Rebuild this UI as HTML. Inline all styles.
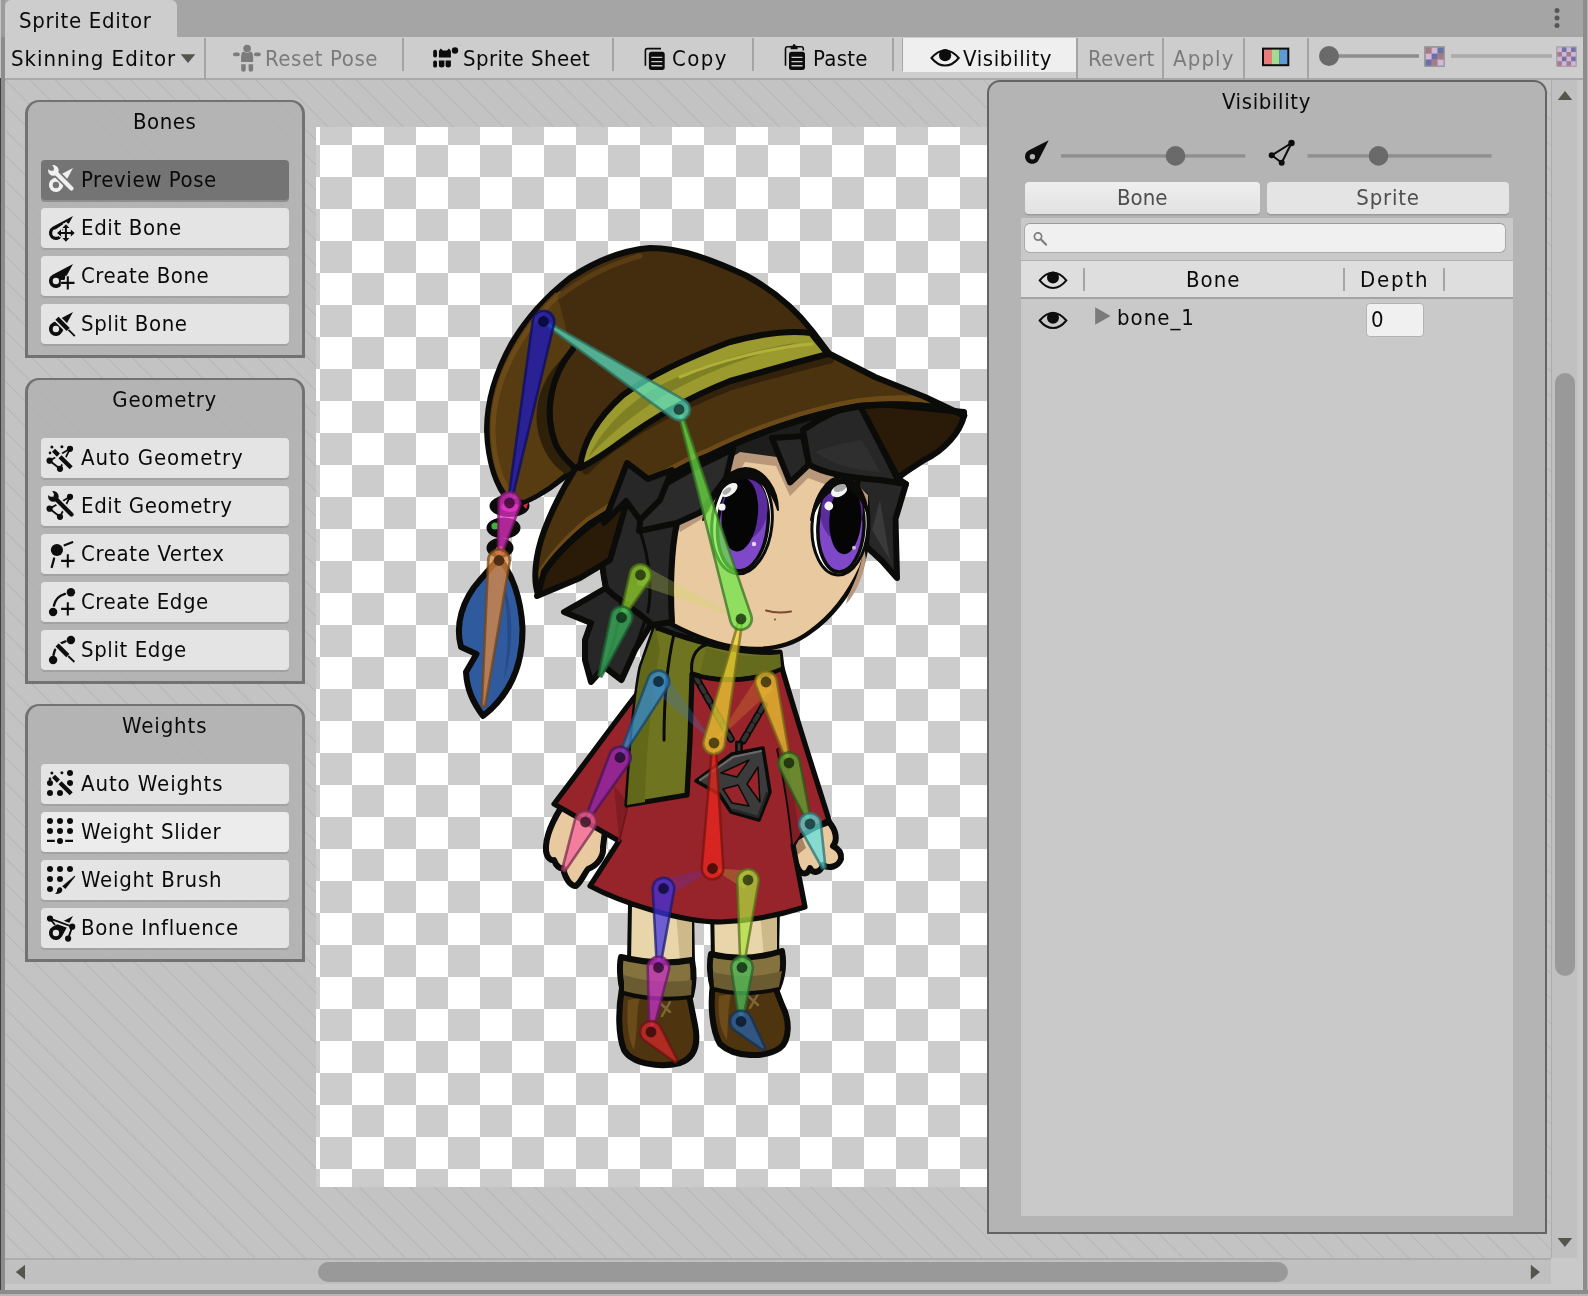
<!DOCTYPE html>
<html lang="en">
<head>
<meta charset="utf-8">
<title>Sprite Editor</title>
<style>
*{box-sizing:border-box;margin:0;padding:0}
html,body{width:1588px;height:1296px;overflow:hidden}
body{position:relative;background:#c3c3c3;font-family:"DejaVu Sans Condensed","DejaVu Sans","Liberation Sans",sans-serif;font-stretch:condensed;font-size:22px;letter-spacing:.4px;color:#0a0a0a;-webkit-font-smoothing:antialiased}
.abs{position:absolute}
#lborder{left:0;top:0;width:5px;height:1296px;background:linear-gradient(#9c9c9c 0,#9c9c9c 36px,#8c8c8c 38px);border-left:1px solid #404040;border-image:linear-gradient(#c4c4c4 0,#c4c4c4 79px,#404040 79px) 1}
#rborder{left:1583px;top:0;width:5px;height:1296px;background:#8c8c8c;border-right:1px solid #b5b5b5}
#tabbar{left:4px;top:0;width:1579px;height:38px;background:#a5a5a5;border-bottom:1.500px solid #9a9a9a}
#tab{left:5px;top:0;width:172px;height:38px;background:#cdcdcd;border-radius:6px 6px 0 0}
#tab span{position:absolute;left:14px;top:7px;line-height:28px;white-space:nowrap}
#toolbar{left:4px;top:37px;width:1579px;height:43px;background:#cdcdcd;border-bottom:2px solid #a9a9a9}
.sep{position:absolute;top:38px;width:2px;height:33px;background:#a4a4a4}
.tbt{position:absolute;top:45px;white-space:nowrap;line-height:28px;height:28px}
.dis{color:#7b7b7b}
#visbtn{left:903px;top:38px;width:173px;height:34px;background:#efefef}
/* panels */
.panel{position:absolute;left:25px;width:280px;background:rgba(177,177,177,.86);border:3px solid #727272;border-width:2px 3.300px 3.500px 3.300px;border-radius:14px 14px 0 0}
.panel h3{position:absolute;left:0;width:273.400px;top:6px;text-align:center;font-weight:normal;font-size:22px;line-height:28px}
.btn{position:absolute;left:12.700px;width:248px;height:40px;background:#e4e4e4;border-radius:4px;box-shadow:0 2px 0 #a2a2a2}
.btn span{position:absolute;left:40px;top:6px;line-height:28px;white-space:nowrap}
.btn svg{position:absolute;left:0;top:0;width:40px;height:40px}
.btn.on{background:#747474;box-shadow:0 2px 0 #8e8e8e}
#checker{left:316px;top:127px;width:672px;height:1060px;background:#fff}

#vis{left:987px;top:80px;width:560px;height:1154px;background:#b4b4b4;border:2px solid #646464;border-radius:13px 13px 0 0}
#vis .ttl{position:absolute;left:0;width:555px;top:6px;text-align:center;line-height:28px}
#vlist{left:1021px;top:218px;width:492px;height:998px;background:#c9c9c9}
.vbtn{position:absolute;top:182px;height:32px;border-radius:4px;background:linear-gradient(#efefef,#e1e1e1);box-shadow:0 1.500px 0 #9b9b9b;text-align:center;color:#4e4e4e;line-height:32px}
#vsearch{left:1024px;top:223px;width:482px;height:30px;background:#f0f0f0;border:1.500px solid #a9a9a9;border-top-color:#9a9a9a;border-radius:6px}
#vhead{left:1021px;top:260px;width:492px;height:39px;background:#dedede;border-top:1px solid #b0b0b0;border-bottom:2px solid #a3a3a3}
.hsep{position:absolute;top:268px;width:2px;height:23px;background:#a6a6a6}
.vt{position:absolute;white-space:nowrap;line-height:28px}
#depth{left:1366px;top:303px;width:58px;height:34px;background:#f0f0f0;border:1.500px solid #b3b3b3;border-radius:4px}
#vscroll{left:1551px;top:80px;width:26px;height:1178px;background:#c0c0c0;border-left:1.500px solid #adadad}
#vstrip{left:1577px;top:80px;width:6px;height:1210px;background:#c9c9c9}
#vthumb{left:1555px;top:372.500px;width:20px;height:603.500px;background:#999;border-radius:10px}
#hscroll{left:4px;top:1258px;width:1547px;height:26px;background:#c0c0c0;border-top:2px solid #adadad}
#hthumb{left:318px;top:1262px;width:970px;height:20px;background:#999;border-radius:10px}
#corner{left:1551px;top:1258px;width:32px;height:26px;background:#c9c9c9}
#bot1{left:4px;top:1284px;width:1579px;height:6px;background:#c9c9c9}
#bot2{left:0;top:1290px;width:1588px;height:6px;background:#8c8c8c;border-bottom:2px solid #b5b5b5}
.btn span,.tbt,.vt,.vbtn,.panel h3,#tab span,#vis .ttl{will-change:transform}
</style>
</head>
<body>
<svg id="hatch" class="abs" style="left:4px;top:79px" width="1579" height="1180" viewBox="4 79 1579 1180"><defs><pattern id="hp" width="25.090" height="25.090" patternUnits="userSpaceOnUse" patternTransform="translate(0.380 0)"><path d="M-1 -1L26.090 26.090" stroke="#a9a9a9" stroke-width="0.750"/></pattern></defs><rect x="4" y="79" width="1579" height="1180" fill="#c3c3c3"/><rect x="4" y="79" width="1579" height="1180" fill="url(#hp)"/></svg>
<div id="tabbar" class="abs"></div>
<div id="tab" class="abs"><span style="letter-spacing:0.69px">Sprite Editor</span></div>
<div id="toolbar" class="abs"></div>

<div class="sep" style="left:204px;height:41px"></div>
<div class="sep" style="left:402px"></div>
<div class="sep" style="left:612px"></div>
<div class="sep" style="left:752px"></div>
<div class="sep" style="left:892px"></div>
<div class="sep" style="left:902px"></div>
<div id="visbtn" class="abs"></div>
<div class="sep" style="left:1076px;height:41px"></div>
<div class="sep" style="left:1162px;height:41px"></div>
<div class="sep" style="left:1243px;height:41px"></div>
<div class="sep" style="left:1307px;height:41px"></div>
<div class="tbt" style="left:11px;letter-spacing:1.01px">Skinning Editor</div>
<div class="tbt dis" style="left:265px;letter-spacing:0.59px">Reset Pose</div>
<div class="tbt" style="left:463px;letter-spacing:0.42px">Sprite Sheet</div>
<div class="tbt" style="left:672px;letter-spacing:1.43px">Copy</div>
<div class="tbt" style="left:813px;letter-spacing:0.29px">Paste</div>
<div class="tbt" style="left:963px;letter-spacing:0.62px">Visibility</div>
<div class="tbt dis" style="left:1088px;letter-spacing:0.29px">Revert</div>
<div class="tbt dis" style="left:1173px;letter-spacing:1.15px">Apply</div>
<svg class="abs" style="left:0;top:0" width="1588" height="80" viewBox="0 0 1588 80">
<!-- dropdown arrow -->
<path d="M180.7 54.2h14.6l-7.3 8.8z" fill="#55554e"/>
<!-- reset pose person -->
<g fill="#7b7b7b">
<circle cx="247.1" cy="48.6" r="3.8"/>
<rect x="233" y="52.4" width="6.8" height="3.8" rx="1.9"/>
<rect x="254" y="52.4" width="6.8" height="3.8" rx="1.9"/>
<path d="M241.6 53.2q1-1.6 2.2-1.7a4.6 4.6 0 0 0 6.6 0q1.2.1 2.2 1.7q1 4 .5 8.7h-12q-.5-4.700 .5-8.700z"/>
<path d="M241.2 64.300h4.500v5.600q0 1.800-2.250 1.800t-2.250-1.800z"/>
<path d="M248.600 64.300h4.500v5.600q0 1.800-2.250 1.800t-2.250-1.800z"/>
</g>
<!-- sprite sheet icon -->
<g fill="#0d0d0d">
<rect x="433.200" y="49.800" width="3.800" height="7.700" rx="1.700"/>
<rect x="433.200" y="60.500" width="3.800" height="7.100" rx="1.700"/>
<path d="M438.900 57.400v-6.300l1.900-2.500l2 2h4.200l2-2l1.900 2.500v6.300z"/>
<path d="M438.900 60.500h5.500v5.200q0 1.800-2.750 1.800t-2.750-1.800z"/>
<path d="M445.600 60.500h5.300v5.200q0 1.800-2.650 1.800t-2.650-1.800z"/>
<circle cx="455" cy="50.500" r="3.200"/>
</g>
<!-- copy icon -->
<g fill="#0d0d0d">
<path d="M661 48.600h-13.500q-2.100 0-2.100 2.100v15" fill="none" stroke="#0d0d0d" stroke-width="1.600"/>
<rect x="648.900" y="51.700" width="15.800" height="18.200" rx="2.600"/>
<path d="M651.300 56.700h11v1.400h-11zM651.300 60.900h11v1.400h-11zM651.300 65h11v1.400h-11z" fill="#cdcdcd"/>
</g>
<!-- paste icon -->
<g fill="#0d0d0d">
<path d="M803.300 50.500v-1.700q0-2.100-2.100-2.100h-13.600q-2.100 0-2.100 2.100v17" fill="none" stroke="#0d0d0d" stroke-width="1.600"/>
<path d="M790.600 49.300v-2.600q0-1 1-1h1q.4-1.600 1.500-1.600t1.500 1.600h1q1 0 1 1v2.600z"/>
<rect x="789" y="51.700" width="16" height="18.200" rx="2.600"/>
<path d="M791.500 56.700h11v1.400h-11zM791.500 60.900h11v1.400h-11zM791.500 65h11v1.400h-11z" fill="#cdcdcd"/>
</g>
<!-- eye -->
<path d="M931.500 58q6.200-7.600 13.600-7.600t13.600 7.600q-6.200 7.600-13.600 7.600t-13.600-7.600z" fill="none" stroke="#0d0d0d" stroke-width="2"/>
<circle cx="945.100" cy="55.200" r="6.100" fill="#0d0d0d"/>
<!-- rgb icon -->
<rect x="1262" y="47.600" width="27.300" height="18.600" fill="#0d0d0d"/>
<rect x="1264" y="49.600" width="8" height="14.600" fill="#e97b7b"/>
<rect x="1272" y="49.600" width="7.600" height="14.600" fill="#a2dc8e"/>
<rect x="1279.600" y="49.600" width="7.700" height="14.600" fill="#5d9ad6"/>
<!-- slider -->
<rect x="1330" y="54.200" width="89" height="3.600" fill="#8f8f8f"/>
<circle cx="1329" cy="56" r="10" fill="#6a6a6a"/>
<rect x="1451" y="54.200" width="101" height="3.600" fill="#ababab"/>
<!-- mip icons -->
<g>
<rect x="1424.100" y="46.100" width="20.800" height="20.800" fill="#979797"/>
<rect x="1425.8" y="47.8" width="5.9" height="5.9" fill="#a87a84"/><rect x="1431.7" y="47.8" width="5.9" height="5.9" fill="#d0b9d8"/><rect x="1437.6" y="47.8" width="5.9" height="5.9" fill="#6a71a8"/><rect x="1425.8" y="53.7" width="5.9" height="5.9" fill="#d0b9d8"/><rect x="1431.7" y="53.7" width="5.9" height="5.9" fill="#6a71a8"/><rect x="1437.6" y="53.7" width="5.9" height="5.9" fill="#a87a84"/><rect x="1425.8" y="59.6" width="5.9" height="5.9" fill="#6a71a8"/><rect x="1431.7" y="59.6" width="5.9" height="5.9" fill="#a87a84"/><rect x="1437.6" y="59.6" width="5.9" height="5.9" fill="#d0b9d8"/>
</g>
<g>
<rect x="1556.300" y="46.400" width="20.400" height="20.400" fill="#9a9a9a"/>
<rect x="1557.300" y="47.400" width="18.400" height="18.400" fill="#cdb6d6"/>
<rect x="1561.9" y="47.4" width="4.6" height="4.6" fill="#7173a6"/>
<rect x="1571.1" y="47.4" width="4.6" height="4.6" fill="#7173a6"/>
<rect x="1557.3" y="52.0" width="4.6" height="4.6" fill="#a77a8a"/>
<rect x="1566.5" y="52.0" width="4.6" height="4.6" fill="#a77a8a"/>
<rect x="1561.9" y="56.6" width="4.6" height="4.6" fill="#7173a6"/>
<rect x="1571.1" y="56.6" width="4.6" height="4.6" fill="#7173a6"/>
<rect x="1557.3" y="61.2" width="4.6" height="4.6" fill="#a77a8a"/>
<rect x="1566.5" y="61.2" width="4.6" height="4.6" fill="#a77a8a"/>
</g>
<!-- kebab -->
<circle cx="1557" cy="10.500" r="2.500" fill="#565656"/><circle cx="1557" cy="18" r="2.500" fill="#565656"/><circle cx="1557" cy="25.500" r="2.500" fill="#565656"/>
</svg>


<div id="checker" class="abs"><svg width="672" height="1060" viewBox="316 127 672 1060" style="position:absolute;left:0;top:0">
<defs><pattern id="ck" x="320" y="145" width="64" height="64" patternUnits="userSpaceOnUse"><rect width="64" height="64" fill="#fff"/><rect x="32" width="32" height="32" fill="#ccc"/><rect y="32" width="32" height="32" fill="#ccc"/></pattern></defs>
<rect x="316" y="127" width="672" height="1060" fill="url(#ck)"/>
<!--CH0-->
<path d="M499 558C512 573 521 598 522.500 628C523 663 511 694 483 716C473 702 467 690 466 672L476.500 654L461 647C455 625 462 600 480 580C488 571 494 564 499 558Z" fill="#2f5a9d" stroke="#0b0b09" stroke-width="6" stroke-linejoin="round" stroke-linecap="round"/>
<path d="M500 575C512 600 516 640 504 680C510 640 508 600 500 575Z" fill="#264b86"/>
<ellipse cx="509.500" cy="506" rx="20" ry="11" fill="#0b0b09"/><ellipse cx="503.500" cy="528" rx="17" ry="10.500" fill="#0b0b09"/><ellipse cx="500" cy="548" rx="13.500" ry="10" fill="#0b0b09"/>
<circle cx="495" cy="526" r="3.600" fill="#3fae3a"/><ellipse cx="510" cy="507" rx="9" ry="5" fill="#b0309a"/><path d="M522 504l7 -3l-3 8z" fill="#d03040"/><circle cx="500" cy="551" r="5" fill="#b06a28"/>
<path d="M603 500L601 556L606 588L564 612L591 623L585 640L585 660L591 682L604.500 667L621.500 680L635 650L650 626L690 640L700 500Z" fill="#272727" stroke="#0b0b09" stroke-width="6" stroke-linejoin="round" stroke-linecap="round"/>
<path d="M606 588L625 600M604.500 667C612 650 618 630 622 600M621.500 680C630 660 640 640 648 610" fill="none" stroke="#0b0b09" stroke-width="3" stroke-linejoin="round" stroke-linecap="round"/>
<path d="M860 470L906 484L895.500 519L897 578L882 561L868 548L850 520Z" fill="#272727" stroke="#0b0b09" stroke-width="6" stroke-linejoin="round" stroke-linecap="round"/>
<path d="M880 500L890 560L872 530Z" fill="#3a3a3a"/>
<path d="M630 905L629 962L693 964L692 905Z" fill="#e8d6aa" stroke="#0b0b09" stroke-width="4" stroke-linejoin="round" stroke-linecap="round"/>
<path d="M712 905L713 960L777 958L778 905Z" fill="#e8d6aa" stroke="#0b0b09" stroke-width="4" stroke-linejoin="round" stroke-linecap="round"/>
<path d="M676 912L692 912L692 962L680 962Z" fill="#cdb98a"/>
<path d="M760 912L777 912L777 958L764 958Z" fill="#cdb98a"/>
<path d="M622 988C618 1010 618 1035 624 1050C632 1064 660 1068 680 1063C694 1058 699 1045 695 1025L688 990Z" fill="#4e3510" stroke="#0b0b09" stroke-width="6" stroke-linejoin="round" stroke-linecap="round"/>
<path d="M713 984C710 1005 712 1030 720 1044C735 1058 765 1058 780 1048C790 1040 790 1020 782 1005L774 984Z" fill="#4e3510" stroke="#0b0b09" stroke-width="6" stroke-linejoin="round" stroke-linecap="round"/>
<path d="M628 1000C626 1020 628 1040 634 1050C638 1030 636 1010 640 998Z" fill="#6b4b1a"/>
<path d="M719 996C717 1012 720 1030 727 1040C728 1022 728 1008 731 994Z" fill="#6b4b1a"/>
<path d="M660 1003L670 1012M670 1002L662 1016M748 996L758 1005M758 994L750 1008" fill="none" stroke="#7d6638" stroke-width="2.5" stroke-linejoin="round" stroke-linecap="round"/>
<path d="M621 957C619 966 620 982 623 992C645 998 670 999 691 996C694 984 694 970 692 960C670 964 645 963 621 957Z" fill="#85733f" stroke="#0b0b09" stroke-width="6" stroke-linejoin="round" stroke-linecap="round"/>
<path d="M711 954C709 964 710 978 713 988C735 994 758 993 778 988C783 976 784 962 782 951C760 958 735 960 711 954Z" fill="#85733f" stroke="#0b0b09" stroke-width="6" stroke-linejoin="round" stroke-linecap="round"/>
<path d="M624 975C645 982 670 983 692 980L691 995C670 998 645 997 624 991Z" fill="#6b5b30"/>
<path d="M713 972C735 978 760 977 782 971L779 987C758 992 735 993 714 987Z" fill="#6b5b30"/>
<path d="M566 800C551 822 545 838 546 851C547 858 551 861 554 860C556 866 560 869 563 868C565 878 570 886 576 886C582 881 584 874 588 869C598 865 604 856 603 847L606 824Z" fill="#e9c9a0" stroke="#0b0b09" stroke-width="6" stroke-linejoin="round" stroke-linecap="round"/>
<path d="M797 834C792 846 793 858 797 866C800 875 807 876 810 868C813 874 820 873 823 865C829 869 838 867 841 859C842 852 837 848 833 846C838 840 836 830 829 822Z" fill="#e9c9a0" stroke="#0b0b09" stroke-width="6" stroke-linejoin="round" stroke-linecap="round"/>
<path d="M797 840C794 846 794 852 796 856L806 848L802 838Z" fill="#a88262"/>
<path d="M692 672L640 690C620 715 595 750 554 804L619 841L590 886C620 902 680 922 720 922C750 921 780 915 805 907L793 845L797 838L829 820C815 775 800 730 782 668Z" fill="#97232b" stroke="#0b0b09" stroke-width="5.2" stroke-linejoin="round" stroke-linecap="round"/>
<path d="M619 841C624 820 628 805 630 790" fill="none" stroke="#6f151c" stroke-width="2.5" stroke-linejoin="round" stroke-linecap="round"/>
<path d="M793 845C790 815 786 785 778 750" fill="none" stroke="#0b0b09" stroke-width="3.5" stroke-linejoin="round" stroke-linecap="round"/>
<path d="M793 845C790 815 786 785 778 750L784 740L800 835Z" fill="#7f1c24"/>
<path d="M614 786L628 803L619 838Z" fill="#7f1c24"/>
<path d="M695 676L731 739M764 705L743 741" fill="none" stroke="#0b0b09" stroke-width="7.5" stroke-linejoin="round" stroke-linecap="round" stroke-dasharray="8.500 2.500"/>
<path d="M695 676L731 739M764 705L743 741" fill="none" stroke="#333333" stroke-width="4.2" stroke-linejoin="round" stroke-linecap="round" stroke-dasharray="6.500 4.500" stroke-dashoffset="-1"/>
<path d="M736.400 742L741.600 742L741.600 755L736.400 755Z" fill="#3a3a3a" stroke="#0b0b09" stroke-width="2.5" stroke-linejoin="round" stroke-linecap="round"/>
<path d="M696 781L732 754L763 748L770 792L759 820L731 812L719 794Z" fill="#3b3b3b" stroke="#0b0b09" stroke-width="3.5" stroke-linejoin="round" stroke-linecap="round"/>
<path d="M721 773L749 760L737 777Z" fill="#97232b" stroke="#0b0b09" stroke-width="1.5" stroke-linejoin="round" stroke-linecap="round"/>
<path d="M747 784L758 767L760 802Z" fill="#97232b" stroke="#0b0b09" stroke-width="1.5" stroke-linejoin="round" stroke-linecap="round"/>
<path d="M723 789L738 785L749 806L732 803Z" fill="#97232b" stroke="#0b0b09" stroke-width="1.5" stroke-linejoin="round" stroke-linecap="round"/>
<path d="M700 780L733 757L761 751" fill="none" stroke="#6a6a6a" stroke-width="2.2" stroke-linejoin="round" stroke-linecap="round"/>
<path d="M733 810L758 817L767 793" fill="none" stroke="#262626" stroke-width="2.5" stroke-linejoin="round" stroke-linecap="round"/>
<path d="M655 627C690 640 740 655 780 652L782 668C760 680 725 684 692 674L690 740L687 795L627 805C630 760 634 700 641 667Z" fill="#6f7421" stroke="#0b0b09" stroke-width="5.2" stroke-linejoin="round" stroke-linecap="round"/>
<path d="M674 634C668 660 664 700 664 740M692 674C690 660 695 648 706 645" fill="none" stroke="#0b0b09" stroke-width="3" stroke-linejoin="round" stroke-linecap="round"/>
<path d="M641 667C634 700 630 760 627 805L645 802C646 760 650 700 660 650L655 627Z" fill="#626819"/>
<path d="M706 647C730 656 760 658 780 654L781 667C760 676 730 680 700 674Z" fill="#656b1c"/>
<path d="M677 500C672 530 670 580 671 624C690 634 715 645 740 648C765 651 790 647 810 632C830 618 848 596 861 568C868 550 870 520 866 495L800 455L700 455Z" fill="#e9c9a0" stroke="#0b0b09" stroke-width="4.5" stroke-linejoin="round" stroke-linecap="round"/>
<path d="M677 523L701 512L726 478L733 451L775 440L790 482L809 465L850 478L868 495L868 515C860 502 845 490 830 486L808 478L790 496L776 466L745 462L722 500L700 520L680 532Z" fill="#b8977a"/>
<path d="M848 596C856 580 862 565 864 545L866 560C862 580 854 596 846 604Z" fill="#b8977a"/>
<path d="M766 610.500C774 613 783 613 791 611.500" fill="none" stroke="#7a4a30" stroke-width="2" stroke-linejoin="round" stroke-linecap="round"/>
<circle cx="775" cy="619.500" r="1" fill="#7a4a30"/>
<g transform="rotate(6 742 523)"><ellipse cx="742" cy="523" rx="30" ry="51" fill="#fff" stroke="#0b0b09" stroke-width="3"/><ellipse cx="743" cy="524" rx="25" ry="47" fill="#7e48c8" stroke="#0b0b09" stroke-width="3.500"/><ellipse cx="743" cy="509" rx="23" ry="31" fill="#5b2c9e"/><ellipse cx="739" cy="515" rx="18" ry="37" fill="#050505"/></g>
<path d="M703 520C710 490 725 470 745 468C765 468 778 490 778 510C772 490 760 478 745 478C728 480 712 496 703 520Z" fill="#0b0b09" stroke="#0b0b09" stroke-width="2" stroke-linejoin="round" stroke-linecap="round"/>
<g transform="rotate(3 840 526)"><ellipse cx="840" cy="526" rx="28" ry="49" fill="#fff" stroke="#0b0b09" stroke-width="3"/><ellipse cx="841" cy="527" rx="23" ry="45" fill="#7e48c8" stroke="#0b0b09" stroke-width="3.500"/><ellipse cx="841" cy="512" rx="21" ry="29" fill="#5b2c9e"/><ellipse cx="845" cy="519" rx="16" ry="35" fill="#050505"/></g>
<path d="M811 520C815 495 826 480 842 479C856 480 866 496 868 515C862 498 854 488 842 488C828 489 818 500 811 520Z" fill="#0b0b09" stroke="#0b0b09" stroke-width="2" stroke-linejoin="round" stroke-linecap="round"/>
<ellipse cx="729.500" cy="490" rx="9.500" ry="5" fill="#f4f4f4" transform="rotate(-38 729.500 490)"/><ellipse cx="727" cy="491" rx="5" ry="2.500" fill="#b0b0b0" transform="rotate(-38 727 491)"/><circle cx="722" cy="507" r="3.600" fill="#f4f4f4"/><circle cx="754" cy="544" r="2.200" fill="#e8d8f4"/>
<ellipse cx="839" cy="491" rx="8.500" ry="5.500" fill="#f4f4f4" transform="rotate(-25 839 491)"/><ellipse cx="840" cy="488" rx="6.500" ry="3.500" fill="#a8a8a8" transform="rotate(-20 840 488)"/><circle cx="828.800" cy="506" r="4.400" fill="#f4f4f4"/><circle cx="854" cy="547.700" r="2" fill="#c8c0d8"/>
<path d="M600 520L640 465L700 440L780 415L862 398L940 405L900 478L860 480L800 460L740 452L680 490L640 530Z" fill="#1d1d1d"/>
<path d="M603 505C600 530 600 560 606 588C616 600 640 612 652 625L672 622C670 590 671 550 677 523L660 512L640 500Z" fill="#272727" stroke="#0b0b09" stroke-width="6" stroke-linejoin="round" stroke-linecap="round"/>
<path d="M640 531C650 560 652 590 648 612" fill="none" stroke="#0b0b09" stroke-width="3" stroke-linejoin="round" stroke-linecap="round"/>
<path d="M733 449L726 478L701 512L677 523L639 531L643 497L690 470Z" fill="#2b2b2b" stroke="#0b0b09" stroke-width="6" stroke-linejoin="round" stroke-linecap="round"/>
<path d="M772 438L790 482.500L809 464.600L803 436Z" fill="#272727" stroke="#0b0b09" stroke-width="6" stroke-linejoin="round" stroke-linecap="round"/>
<path d="M803 430L809 464.600C825 474 850 478 880 480L906 484L897 478L860 404C840 408 820 418 803 430Z" fill="#272727" stroke="#0b0b09" stroke-width="6" stroke-linejoin="round" stroke-linecap="round"/>
<path d="M815 452C830 446 848 442 862 440L880 472C855 470 835 466 815 452Z" fill="#2f2f2f"/>
<path d="M858 402L964 412L964 416C960 432 945 450 924 460C912 468 905 472 898 478Z" fill="#2a1b09" stroke="#0b0b09" stroke-width="6" stroke-linejoin="round" stroke-linecap="round"/>
<path d="M537 596L544 572C560 548 585 526 627 501L610 560L580 578Z" fill="#2a1b09" stroke="#0b0b09" stroke-width="6" stroke-linejoin="round" stroke-linecap="round"/>
<path d="M509 500C497 488 488 462 487 430C487 398 497 370 512 343C528 316 547 296 570 278C597 260 625 250 650 248C682 248 712 260 745 275C775 291 797 311 813 332L828 352C805 360 768 370 730 381C692 396 656 416 622 441C606 453 592 462 580 468L574 468C560 482 540 495 523 502Z" fill="#442d0e" stroke="#0b0b09" stroke-width="6" stroke-linejoin="round" stroke-linecap="round"/>
<path d="M511 498C499 486 490 462 489.500 430C489.500 398 499 371 514 345C526 324 540 306 556 292C562 310 566 330 571 350C551 376 543 412 556 445L572 466C558 480 540 493 524 500Z" fill="#573b11"/>
<path d="M513 496C501 484 493.500 460 493 430C493 400 502 373 517 347C530 325 545 307 560 294" fill="none" stroke="#6b4a18" stroke-width="5" stroke-linejoin="round" stroke-linecap="round"/>
<path d="M573 349C551 375 543 412 556 445C561 455 568 462 575 468L566 474C552 466 540 448 537 425C534 395 548 368 573 349Z" fill="#2f2009"/>
<path d="M573 349C551 375 543 412 556 445C561 455 568 462 575 468" fill="none" stroke="#0b0b09" stroke-width="6" stroke-linejoin="round" stroke-linecap="round"/>
<path d="M560 296C580 280 610 264 640 256" fill="none" stroke="#5a3d13" stroke-width="5" stroke-linejoin="round" stroke-linecap="round"/>
<clipPath id="brimclip"><path d="M575 469C588 458 600 448 617 436C654 413 692 396 730 381C768 370 805 360 828 353L875 377L925 397L964 415.500C950 406 900 402 860 406C805 415 749 436 711 455C673 470 627 501 590 524C568 542 552 560 544 572L538 594C533 580 535 556 544 531C550 515 562 490 575 469Z"/></clipPath>
<path d="M575 469C588 458 600 448 617 436C654 413 692 396 730 381C768 370 805 360 828 353L875 377L925 397L964 415.500C950 406 900 402 860 406C805 415 749 436 711 455C673 470 627 501 590 524C568 542 552 560 544 572L538 594C533 580 535 556 544 531C550 515 562 490 575 469Z" fill="#4b3310"/>
<g clip-path="url(#brimclip)">
<path d="M930 401C900 398.500 880 400 860 402.500C805 411.500 749 432.500 711 451.500C673 466.500 627 497.500 590 520.500C568 538.500 552 556.500 542 574" fill="none" stroke="#6d4b18" stroke-width="9" stroke-linejoin="round" stroke-linecap="round" stroke-linecap="butt"/>
<path d="M586 470C600 455 610 448 622 441C654 418 692 401 730 386C768 375 805 365 830 359" fill="none" stroke="#33220b" stroke-width="9" stroke-linejoin="round" stroke-linecap="round"/>
</g>
<path d="M575 469C588 458 600 448 617 436C654 413 692 396 730 381C768 370 805 360 828 353L875 377L925 397L964 415.500C950 406 900 402 860 406C805 415 749 436 711 455C673 470 627 501 590 524C568 542 552 560 544 572L538 594C533 580 535 556 544 531C550 515 562 490 575 469Z" fill="none" stroke="#0b0b09" stroke-width="6" stroke-linejoin="round" stroke-linecap="round"/>
<path d="M964 415.500C950 406 900 402 860 406C805 415 749 436 711 455C673 470 627 501 590 524C568 542 552 560 544 572" fill="none" stroke="#0b0b09" stroke-width="6.5" stroke-linejoin="round" stroke-linecap="round"/>
<path d="M580 468C582 447 594 421 623 395C655 372 692 356 730 342C760 334 790 330 811 333L828 354C805 360 768 370 730 381C692 396 656 416 622 441C606 453 592 462 580 468Z" fill="#9b9a2e" stroke="#0b0b09" stroke-width="6" stroke-linejoin="round" stroke-linecap="round"/>
<path d="M588 458C598 436 618 412 648 392C690 368 740 352 800 342C750 356 700 374 660 398C628 418 604 440 588 458Z" fill="#7f8024"/>
<path d="M680 377C720 360 770 348 812 344" fill="none" stroke="#b0b03a" stroke-width="3" stroke-linejoin="round" stroke-linecap="round"/>
<path d="M604 523L627 463L648 479L672 470L660 500L640 520L626 501Z" fill="#272727" stroke="#0b0b09" stroke-width="6" stroke-linejoin="round" stroke-linecap="round"/>
<g id="bones">
<path d="M741 619L644.5 565.8L636.5 584.2Z" fill="rgb(200,220,90)" fill-opacity="0.280"/>
<path d="M714 743L665.9 674.8L651.1 688.2Z" fill="rgb(60,120,200)" fill-opacity="0.280"/>
<path d="M714 743L773.6 688.5L758.4 675.5Z" fill="rgb(235,150,50)" fill-opacity="0.280"/>
<path d="M712.5 868.5L659.7 879.2L667.3 897.8Z" fill="rgb(90,50,200)" fill-opacity="0.280"/>
<path d="M712.5 868.5L744.9 889.5L751.1 870.5Z" fill="rgb(190,200,60)" fill-opacity="0.280"/>
<path d="M701.8 867.4L712.4 743.0L715.6 743.0L723.3 867.7A10.8 10.8 0 1 1 701.8 867.4Z" fill="rgb(240,40,30)" fill-opacity="0.72" stroke="rgb(120,20,15)" stroke-opacity="0.750" stroke-width="2.600" stroke-linejoin="round"/><circle cx="712.5" cy="868.5" r="5.400" fill="rgb(60,10,7)" fill-opacity="0.850"/>
<path d="M703.7 739.8L739.4 618.7L742.6 619.3L724.7 744.4A10.8 10.8 0 1 1 703.7 739.8Z" fill="rgb(240,215,50)" fill-opacity="0.72" stroke="rgb(120,107,25)" stroke-opacity="0.750" stroke-width="2.600" stroke-linejoin="round"/><circle cx="714" cy="743" r="5.400" fill="rgb(60,53,12)" fill-opacity="0.850"/>
<path d="M730.5 621.5L677.5 410.0L680.5 409.0L751.2 615.4A10.8 10.8 0 1 1 730.5 621.5Z" fill="rgb(110,230,70)" fill-opacity="0.72" stroke="rgb(55,115,35)" stroke-opacity="0.750" stroke-width="2.600" stroke-linejoin="round"/><circle cx="741" cy="619" r="5.400" fill="rgb(27,57,17)" fill-opacity="0.850"/>
<path d="M672.5 418.1L542.6 322.8L544.4 320.2L684.3 400.1A10.8 10.8 0 1 1 672.5 418.1Z" fill="rgb(90,225,195)" fill-opacity="0.72" stroke="rgb(45,112,97)" stroke-opacity="0.750" stroke-width="2.600" stroke-linejoin="round"/><circle cx="679" cy="409.5" r="5.400" fill="rgb(22,56,48)" fill-opacity="0.850"/>
<path d="M554.0 324.1L511.1 503.3L507.9 502.7L532.8 320.1A10.8 10.8 0 1 1 554.0 324.1Z" fill="rgb(25,25,200)" fill-opacity="0.72" stroke="rgb(12,12,100)" stroke-opacity="0.750" stroke-width="2.600" stroke-linejoin="round"/><circle cx="543.5" cy="321.5" r="5.400" fill="rgb(6,6,50)" fill-opacity="0.850"/>
<path d="M519.5 507.1L501.1 556.3L497.9 555.7L498.7 503.2A10.8 10.8 0 1 1 519.5 507.1Z" fill="rgb(235,50,205)" fill-opacity="0.72" stroke="rgb(117,25,102)" stroke-opacity="0.750" stroke-width="2.600" stroke-linejoin="round"/><circle cx="509.5" cy="503" r="5.400" fill="rgb(58,12,51)" fill-opacity="0.850"/>
<path d="M509.6 562.4L485.1 706.2L481.9 705.8L488.2 560.2A10.8 10.8 0 1 1 509.6 562.4Z" fill="rgb(230,140,60)" fill-opacity="0.72" stroke="rgb(115,70,30)" stroke-opacity="0.750" stroke-width="2.600" stroke-linejoin="round"/><circle cx="499" cy="560.5" r="5.400" fill="rgb(57,35,15)" fill-opacity="0.850"/>
<path d="M649.1 581.6L623.0 618.2L620.0 616.8L629.9 573.0A10.8 10.8 0 1 1 649.1 581.6Z" fill="rgb(150,215,45)" fill-opacity="0.72" stroke="rgb(75,107,22)" stroke-opacity="0.750" stroke-width="2.600" stroke-linejoin="round"/><circle cx="640.5" cy="575" r="5.400" fill="rgb(37,53,11)" fill-opacity="0.850"/>
<path d="M630.8 622.9L601.5 676.6L598.5 675.4L610.9 615.6A10.8 10.8 0 1 1 630.8 622.9Z" fill="rgb(60,185,95)" fill-opacity="0.72" stroke="rgb(30,92,47)" stroke-opacity="0.750" stroke-width="2.600" stroke-linejoin="round"/><circle cx="621.5" cy="617.5" r="5.400" fill="rgb(15,46,23)" fill-opacity="0.850"/>
<path d="M667.4 687.6L621.4 758.2L618.6 756.8L648.3 677.9A10.8 10.8 0 1 1 667.4 687.6Z" fill="rgb(50,140,215)" fill-opacity="0.72" stroke="rgb(25,70,107)" stroke-opacity="0.750" stroke-width="2.600" stroke-linejoin="round"/><circle cx="658.5" cy="681.5" r="5.400" fill="rgb(12,35,53)" fill-opacity="0.850"/>
<path d="M628.7 763.9L586.9 822.8L584.1 821.2L609.8 753.9A10.8 10.8 0 1 1 628.7 763.9Z" fill="rgb(145,40,185)" fill-opacity="0.72" stroke="rgb(72,20,92)" stroke-opacity="0.750" stroke-width="2.600" stroke-linejoin="round"/><circle cx="620" cy="757.5" r="5.400" fill="rgb(36,10,46)" fill-opacity="0.850"/>
<path d="M594.2 828.4L565.0 871.2L562.0 869.8L575.0 819.6A10.8 10.8 0 1 1 594.2 828.4Z" fill="rgb(245,95,155)" fill-opacity="0.72" stroke="rgb(122,47,77)" stroke-opacity="0.750" stroke-width="2.600" stroke-linejoin="round"/><circle cx="585.5" cy="822" r="5.400" fill="rgb(61,23,38)" fill-opacity="0.850"/>
<path d="M776.7 680.4L790.5 762.6L787.5 763.4L756.1 686.3A10.8 10.8 0 1 1 776.7 680.4Z" fill="rgb(238,205,48)" fill-opacity="0.72" stroke="rgb(119,102,24)" stroke-opacity="0.750" stroke-width="2.600" stroke-linejoin="round"/><circle cx="766" cy="682" r="5.400" fill="rgb(59,51,12)" fill-opacity="0.850"/>
<path d="M799.7 761.2L811.5 823.5L808.5 824.5L779.5 768.2A10.8 10.8 0 1 1 799.7 761.2Z" fill="rgb(90,175,50)" fill-opacity="0.72" stroke="rgb(45,87,25)" stroke-opacity="0.750" stroke-width="2.600" stroke-linejoin="round"/><circle cx="789" cy="763" r="5.400" fill="rgb(22,43,12)" fill-opacity="0.850"/>
<path d="M820.8 823.2L825.5 867.5L822.5 868.5L800.8 829.6A10.8 10.8 0 1 1 820.8 823.2Z" fill="rgb(95,225,225)" fill-opacity="0.72" stroke="rgb(47,112,112)" stroke-opacity="0.750" stroke-width="2.600" stroke-linejoin="round"/><circle cx="810" cy="824" r="5.400" fill="rgb(23,56,56)" fill-opacity="0.850"/>
<path d="M674.1 890.6L660.1 967.6L656.9 967.4L652.7 889.3A10.8 10.8 0 1 1 674.1 890.6Z" fill="rgb(60,50,225)" fill-opacity="0.72" stroke="rgb(30,25,112)" stroke-opacity="0.750" stroke-width="2.600" stroke-linejoin="round"/><circle cx="663.5" cy="888.5" r="5.400" fill="rgb(15,12,56)" fill-opacity="0.850"/>
<path d="M668.9 970.5L652.6 1032.2L649.4 1031.8L647.7 968.1A10.8 10.8 0 1 1 668.9 970.5Z" fill="rgb(205,50,205)" fill-opacity="0.72" stroke="rgb(102,25,102)" stroke-opacity="0.750" stroke-width="2.600" stroke-linejoin="round"/><circle cx="658.5" cy="967.5" r="5.400" fill="rgb(51,12,51)" fill-opacity="0.850"/>
<path d="M660.8 1027.5L677.7 1060.5L675.3 1062.5L645.1 1041.0A10.8 10.8 0 1 1 660.8 1027.5Z" fill="rgb(215,40,40)" fill-opacity="0.72" stroke="rgb(107,20,20)" stroke-opacity="0.750" stroke-width="2.600" stroke-linejoin="round"/><circle cx="651" cy="1032" r="5.400" fill="rgb(53,10,10)" fill-opacity="0.850"/>
<path d="M758.6 882.1L743.6 967.6L740.4 967.4L737.2 880.6A10.8 10.8 0 1 1 758.6 882.1Z" fill="rgb(175,225,60)" fill-opacity="0.72" stroke="rgb(87,112,30)" stroke-opacity="0.750" stroke-width="2.600" stroke-linejoin="round"/><circle cx="748" cy="880" r="5.400" fill="rgb(43,56,15)" fill-opacity="0.850"/>
<path d="M752.5 969.9L742.6 1021.5L739.4 1021.5L731.4 969.5A10.8 10.8 0 1 1 752.5 969.9Z" fill="rgb(80,195,90)" fill-opacity="0.72" stroke="rgb(40,97,45)" stroke-opacity="0.750" stroke-width="2.600" stroke-linejoin="round"/><circle cx="742" cy="967.5" r="5.400" fill="rgb(20,48,22)" fill-opacity="0.850"/>
<path d="M751.0 1017.4L765.2 1048.0L762.8 1050.0L735.2 1030.6A10.8 10.8 0 1 1 751.0 1017.4Z" fill="rgb(40,100,175)" fill-opacity="0.72" stroke="rgb(20,50,87)" stroke-opacity="0.750" stroke-width="2.600" stroke-linejoin="round"/><circle cx="741" cy="1021.5" r="5.400" fill="rgb(10,25,43)" fill-opacity="0.850"/>
</g>
<!--CH1-->
</svg></div>

<!--LP0-->
<div class="panel" style="top:100px;height:257.5px"><h3 style="letter-spacing:0.57px">Bones</h3>
<div class="btn on" style="top:58px"><svg viewBox="0 0 40 40"><path d="M11.62 18.81L32 8L21.07 28.32A7 7 0 1 1 11.62 18.810ZM18.100 25a3.200 3.200 0 1 0-6.400 0a3.200 3.200 0 1 0 6.400 0Z" fill="#f0f0f0" fill-rule="evenodd"/><path d="M15 13L30.500 28.500" stroke="#747474" stroke-width="7.600" stroke-linecap="round"/><circle cx="12.400" cy="10.400" r="7" fill="#747474"/><path d="M15 13L30.500 28.500" stroke="#f0f0f0" stroke-width="4.200" stroke-linecap="round"/><path d="M12.400 10.400m-5.300 0a5.300 5.300 0 1 0 10.600 0a5.300 5.300 0 1 0-10.600 0Z" fill="#f0f0f0"/><path d="M12.800 10.800L4.500 8.500L10.500 2.500Z" fill="#747474"/><circle cx="10.300" cy="8.300" r="2.500" fill="#747474"/></svg><span style="letter-spacing:0.57px">Preview Pose</span></div>
<div class="btn" style="top:106px"><svg viewBox="0 0 40 40"><path d="M11.62 18.81L32 8L21.07 28.32A7 7 0 1 1 11.62 18.810ZM14.900 21.300a3.700 3.700 0 1 0 3.600 4.600L26.500 13.200Z" fill="#0d0d0d" fill-rule="evenodd"/><path d="M24.900 15.300v19.400M15.200 25h19.400" stroke="#e4e4e4" stroke-width="5.500"/><path d="M24.900 14l6 6.800h-12zM24.900 36l6-6.800h-12zM13.900 25l6.800-6v12zM35.900 25l-6.800-6v12z" fill="#e4e4e4"/><path d="M24.900 19v12M18.900 25h12" stroke="#0d0d0d" stroke-width="2"/><path d="M24.900 16.200l3.500 3.900h-7zM24.900 33.800l3.500-3.900h-7zM16.100 25l3.900-3.500v7zM33.700 25l-3.900-3.500v7z" fill="#0d0d0d"/></svg><span style="letter-spacing:0.65px">Edit Bone</span></div>
<div class="btn" style="top:154px"><svg viewBox="0 0 40 40"><path d="M11.62 18.81L32 8L21.07 28.32A7 7 0 1 1 11.62 18.810ZM18.100 25a3.200 3.200 0 1 0-6.400 0a3.200 3.200 0 1 0 6.400 0Z" fill="#0d0d0d" fill-rule="evenodd"/><path d="M26.800 19.700v14M19.800 26.700h14" stroke="#e4e4e4" stroke-width="5.200" stroke-linecap="butt"/><path d="M26.800 20.200v13.400M20.100 26.900h13.400" stroke="#0d0d0d" stroke-width="2.100"/></svg><span style="letter-spacing:0.53px">Create Bone</span></div>
<div class="btn" style="top:202px"><svg viewBox="0 0 40 40"><path d="M11.62 18.81L32 8L21.07 28.32A7 7 0 1 1 11.62 18.810ZM18.100 25a3.200 3.200 0 1 0-6.400 0a3.200 3.200 0 1 0 6.400 0Z" fill="#0d0d0d" fill-rule="evenodd"/><path d="M16 14.3L33.8 32.1" stroke="#e4e4e4" stroke-width="7.400" stroke-linecap="butt"/><path d="M16 14.3L27.2 25.5" stroke="#0d0d0d" stroke-width="4.400"/><path d="M27.599999999999998 25.9L33.8 32.1" stroke="#0d0d0d" stroke-width="1.800"/></svg><span style="letter-spacing:0.6px">Split Bone</span></div>
</div>
<div class="panel" style="top:378px;height:305.5px"><h3 style="letter-spacing:0.76px">Geometry</h3>
<div class="btn" style="top:58px"><svg viewBox="0 0 40 40"><path d="M8.600 22.700L19 30.800L29 10.800Z" fill="none" stroke="#0d0d0d" stroke-width="1.800" stroke-linejoin="round"/><circle cx="8.600" cy="22.700" r="3.100" fill="#0d0d0d"/><circle cx="19" cy="30.800" r="3.100" fill="#0d0d0d"/><circle cx="29" cy="10.800" r="3.100" fill="#0d0d0d"/><path d="M11.500 11.500L31 30.500" stroke="#e4e4e4" stroke-width="8" /><path d="M12.500 12.300L17.400 17.100M19 18.700L30.200 29.700" stroke="#0d0d0d" stroke-width="4.300"/><circle cx="10.900" cy="9" r="1.500" fill="#0d0d0d"/><circle cx="20.900" cy="8.800" r="1.500" fill="#0d0d0d"/><circle cx="9" cy="14.900" r="1.300" fill="#0d0d0d"/></svg><span style="letter-spacing:0.9px">Auto Geometry</span></div>
<div class="btn" style="top:106px"><svg viewBox="0 0 40 40"><path d="M8.600 22.700L19 30.800L29 10.800Z" fill="none" stroke="#0d0d0d" stroke-width="1.800" stroke-linejoin="round"/><circle cx="8.600" cy="22.700" r="3.100" fill="#0d0d0d"/><circle cx="19" cy="30.800" r="3.100" fill="#0d0d0d"/><circle cx="29" cy="10.800" r="3.100" fill="#0d0d0d"/><path d="M15 13L30.500 28.500" stroke="#e4e4e4" stroke-width="7.600" stroke-linecap="round"/><circle cx="12.400" cy="10.400" r="7" fill="#e4e4e4"/><path d="M15 13L30.500 28.500" stroke="#0d0d0d" stroke-width="4.200" stroke-linecap="round"/><path d="M12.400 10.400m-5.300 0a5.300 5.300 0 1 0 10.600 0a5.300 5.300 0 1 0-10.600 0Z" fill="#0d0d0d"/><path d="M12.800 10.800L4.500 8.500L10.500 2.500Z" fill="#e4e4e4"/><circle cx="10.300" cy="8.300" r="2.500" fill="#e4e4e4"/></svg><span style="letter-spacing:0.64px">Edit Geometry</span></div>
<div class="btn" style="top:154px"><svg viewBox="0 0 40 40"><circle cx="15.900" cy="16" r="6.100" fill="#0d0d0d"/><path d="M23.600 11.200L31.200 8.300M13.100 24.500L10.800 33" stroke="#0d0d0d" stroke-width="2.300" stroke-linecap="round"/><path d="M26.800 19.700v14M19.800 26.700h14" stroke="#e4e4e4" stroke-width="5.200" stroke-linecap="butt"/><path d="M26.800 20.200v13.400M20.100 26.900h13.400" stroke="#0d0d0d" stroke-width="2.100"/></svg><span style="letter-spacing:0.63px">Create Vertex</span></div>
<div class="btn" style="top:202px"><svg viewBox="0 0 40 40"><circle cx="29.900" cy="10.200" r="4.200" fill="#0d0d0d"/><circle cx="12.100" cy="30" r="4.200" fill="#0d0d0d"/><path d="M24 11.900Q15.300 14 12.900 23.600" fill="none" stroke="#0d0d0d" stroke-width="2.300" stroke-linecap="round"/><path d="M26.800 19.700v14M19.800 26.700h14" stroke="#e4e4e4" stroke-width="5.200" stroke-linecap="butt"/><path d="M26.800 20.200v13.400M20.100 26.900h13.400" stroke="#0d0d0d" stroke-width="2.100"/></svg><span style="letter-spacing:0.54px">Create Edge</span></div>
<div class="btn" style="top:250px"><svg viewBox="0 0 40 40"><circle cx="29.900" cy="10" r="4.200" fill="#0d0d0d"/><circle cx="12.100" cy="30" r="4.200" fill="#0d0d0d"/><path d="M24.500 11.300Q14.500 14 12.500 25" fill="none" stroke="#0d0d0d" stroke-width="2.300" stroke-linecap="round"/><path d="M16.2 15L33.4 32" stroke="#e4e4e4" stroke-width="7.400" stroke-linecap="butt"/><path d="M16.2 15L26.8 25.6" stroke="#0d0d0d" stroke-width="4.400"/><path d="M27.2 26.0L33.4 32" stroke="#0d0d0d" stroke-width="1.800"/></svg><span style="letter-spacing:0.58px">Split Edge</span></div>
</div>
<div class="panel" style="top:704px;height:257.5px"><h3 style="letter-spacing:0.89px">Weights</h3>
<div class="btn" style="top:58px"><svg viewBox="0 0 40 40"><circle cx="29" cy="9" r="3" fill="#0d0d0d"/><circle cx="29" cy="19" r="3" fill="#0d0d0d"/><circle cx="9" cy="29" r="3" fill="#0d0d0d"/><circle cx="19" cy="29" r="3" fill="#0d0d0d"/><circle cx="9" cy="19" r="3" fill="#0d0d0d"/><path d="M11.500 11.500L31 30.500" stroke="#e4e4e4" stroke-width="8" /><path d="M12.500 12.300L17.400 17.100M19 18.700L30.200 29.700" stroke="#0d0d0d" stroke-width="4.300"/><circle cx="10.900" cy="9" r="1.500" fill="#0d0d0d"/><circle cx="20.900" cy="8.800" r="1.500" fill="#0d0d0d"/><circle cx="9" cy="14.900" r="1.300" fill="#0d0d0d"/></svg><span style="letter-spacing:0.92px">Auto Weights</span></div>
<div class="btn" style="top:106px;background:#ececec"><svg viewBox="0 0 40 40"><circle cx="9" cy="9" r="3" fill="#0d0d0d"/><circle cx="19" cy="9" r="3" fill="#0d0d0d"/><circle cx="29" cy="9" r="3" fill="#0d0d0d"/><circle cx="9" cy="19" r="3" fill="#0d0d0d"/><circle cx="19" cy="19" r="3" fill="#0d0d0d"/><circle cx="29" cy="19" r="3" fill="#0d0d0d"/><circle cx="19" cy="28.9" r="3" fill="#0d0d0d"/><path d="M6 28.900h7.800M24.200 28.900h7.800" stroke="#0d0d0d" stroke-width="2.100"/></svg><span style="letter-spacing:0.68px">Weight Slider</span></div>
<div class="btn" style="top:154px"><svg viewBox="0 0 40 40"><circle cx="9" cy="9" r="3" fill="#0d0d0d"/><circle cx="19" cy="9" r="3" fill="#0d0d0d"/><circle cx="29" cy="9" r="3" fill="#0d0d0d"/><circle cx="9" cy="19" r="3" fill="#0d0d0d"/><circle cx="19" cy="19" r="3" fill="#0d0d0d"/><circle cx="9" cy="29" r="3" fill="#0d0d0d"/><path d="M33.600 15.700L34.300 16.600L24.400 29L21.200 26.200Z" fill="#0d0d0d"/><path d="M14 33.900Q16.500 32.500 16.200 29.500Q17 26.800 19.500 27.300Q22 28.500 21 31.200Q19.500 34.200 14 33.900Z" fill="#0d0d0d"/></svg><span style="letter-spacing:0.75px">Weight Brush</span></div>
<div class="btn" style="top:202px"><svg viewBox="0 0 40 40"><path d="M11.62 18.81L32 8L21.07 28.32A7 7 0 1 1 11.62 18.810ZM18.100 25a3.200 3.200 0 1 0-6.400 0a3.200 3.200 0 1 0 6.400 0Z" fill="#0d0d0d" fill-rule="evenodd"/><path d="M9 10.600L31.200 18.700" stroke="#e4e4e4" stroke-width="5.400"/><circle cx="31.200" cy="18.700" r="4.600" fill="#e4e4e4"/><path d="M14 17L9 10.600L31.200 18.700L27.100 30.600" fill="none" stroke="#0d0d0d" stroke-width="1.900"/><circle cx="9" cy="10.600" r="3.100" fill="#0d0d0d"/><circle cx="31.200" cy="18.700" r="3.100" fill="#0d0d0d"/><circle cx="27.100" cy="30.600" r="3.100" fill="#0d0d0d"/></svg><span style="letter-spacing:0.72px">Bone Influence</span></div>
</div>
<!--LP1-->

<div id="vis" class="abs"><div class="ttl" style="letter-spacing:0.62px">Visibility</div></div>
<div id="vlist" class="abs"></div>
<div class="vbtn" style="left:1025px;width:234.500px;letter-spacing:0.03px">Bone</div>
<div class="vbtn" style="left:1267px;width:242px;letter-spacing:0.76px;background:#e4e4e4">Sprite</div>
<div id="vsearch" class="abs"></div>
<div id="vhead" class="abs"></div>
<div class="hsep" style="left:1083px"></div><div class="hsep" style="left:1343px"></div><div class="hsep" style="left:1443px"></div>
<div class="vt" style="left:1186px;top:266px;letter-spacing:1px">Bone</div>
<div class="vt" style="left:1360px;top:266px;letter-spacing:1.800px">Depth</div>
<div class="vt" style="left:1117px;top:304px;letter-spacing:1px">bone_1</div>
<div id="depth" class="abs"></div>
<div class="vt" style="left:1371px;top:306px">0</div>
<svg class="abs" style="left:988px;top:80px" width="560" height="300" viewBox="988 80 560 300">
<!-- bone icon -->
<path d="M1029 150.200L1048.700 140.200L1038.600 160A7.200 7.200 0 1 1 1029 150.200ZM1035.100 156.800a2.700 2.700 0 1 0-5.400 0a2.700 2.700 0 1 0 5.400 0Z" fill="#0d0d0d" fill-rule="evenodd"/>
<rect x="1061" y="154.200" width="184.200" height="3.400" fill="#8f8f8f"/>
<circle cx="1175.500" cy="155.900" r="9.800" fill="#6a6a6a"/>
<path d="M1291.500 143L1271.700 155.300L1281.700 162.800Z" fill="none" stroke="#0d0d0d" stroke-width="2" stroke-linejoin="round"/>
<circle cx="1291.500" cy="143" r="3.200" fill="#0d0d0d"/><circle cx="1271.700" cy="155.300" r="3" fill="#0d0d0d"/><circle cx="1281.700" cy="162.800" r="3" fill="#0d0d0d"/>
<rect x="1307.600" y="154.200" width="184" height="3.400" fill="#8f8f8f"/>
<circle cx="1378.500" cy="155.900" r="9.800" fill="#6a6a6a"/>
<!-- search icon -->
<circle cx="1038" cy="236.500" r="3.600" fill="none" stroke="#7d7d7d" stroke-width="1.700"/>
<path d="M1040.800 239.300L1046 244.600" stroke="#7d7d7d" stroke-width="2.200" stroke-linecap="round"/>
<!-- eyes -->
<g>
<path d="M1039.700 280.300q6.100-7.600 13.300-7.600t13.300 7.600q-6.100 7.600-13.300 7.600t-13.300-7.600z" fill="none" stroke="#0d0d0d" stroke-width="2"/>
<circle cx="1053" cy="277.600" r="6" fill="#0d0d0d"/>
</g>
<g transform="translate(0 40.200)">
<path d="M1039.700 280.300q6.100-7.600 13.300-7.600t13.300 7.600q-6.100 7.600-13.300 7.600t-13.300-7.600z" fill="none" stroke="#0d0d0d" stroke-width="2"/>
<circle cx="1053" cy="277.600" r="6" fill="#0d0d0d"/>
</g>
<path d="M1095.200 307.300L1110.500 316L1095.200 324.700Z" fill="#7b7b7b"/>
</svg>


<div id="vscroll" class="abs"></div><div id="vstrip" class="abs"></div><div id="vthumb" class="abs"></div>
<div id="hscroll" class="abs"></div><div id="hthumb" class="abs"></div>
<div id="corner" class="abs"></div>
<div id="bot1" class="abs"></div>
<svg class="abs" style="left:0;top:0;pointer-events:none" width="1588" height="1296" viewBox="0 0 1588 1296">
<path d="M1557.800 100h14.400l-7.200-8.900z" fill="#55554e"/>
<path d="M1557.600 1238h14.600l-7.300 9z" fill="#55554e"/>
<path d="M25 1264.800v14.600l-9.200-7.300z" fill="#55554e"/>
<path d="M1530.800 1264.800v14.600l9.200-7.300z" fill="#55554e"/>
</svg>

<div id="lborder" class="abs"></div>
<div id="rborder" class="abs"></div>
<div id="bot2" class="abs"></div>
</body>
</html>
